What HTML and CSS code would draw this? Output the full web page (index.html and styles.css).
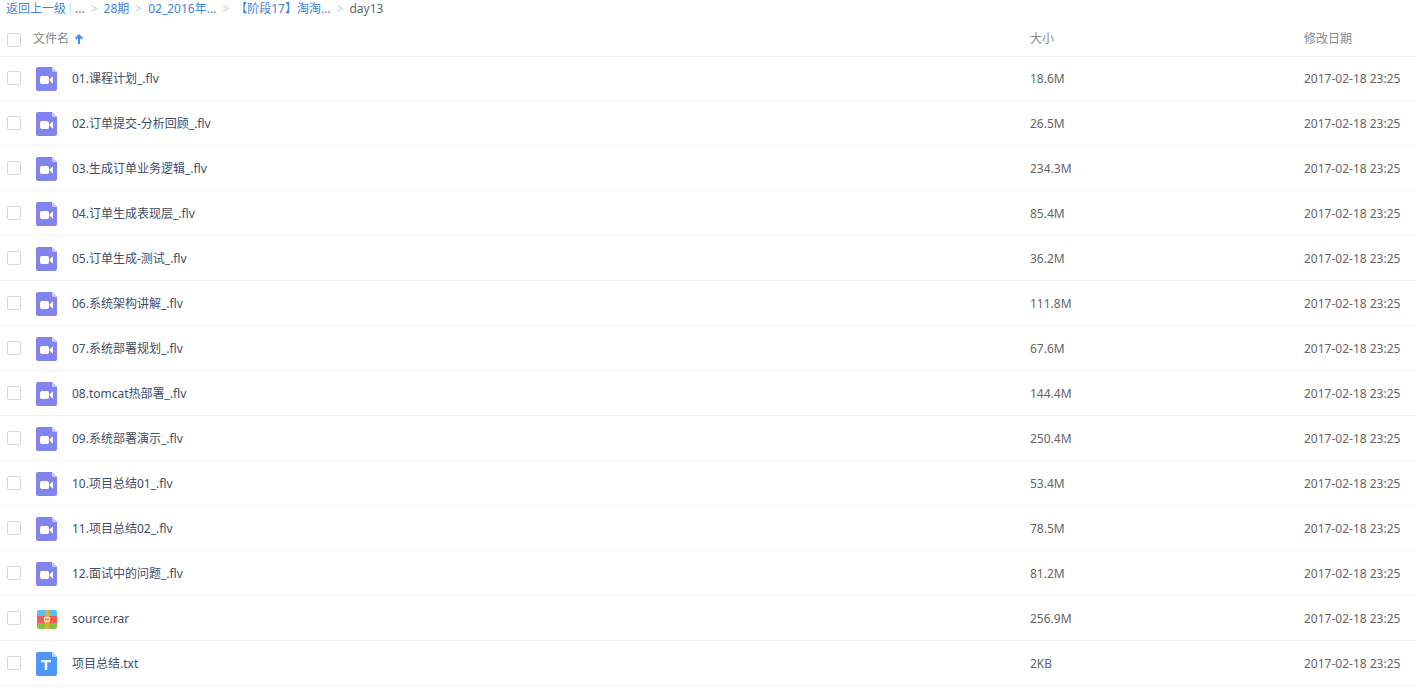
FILE: index.html
```html
<!DOCTYPE html>
<html lang="zh-CN">
<head>
<meta charset="utf-8">
<title>day13</title>
<link rel="stylesheet" href="styles.css">
</head>
<body>
<svg class="sprite" aria-hidden="true">
  <symbol id="icon-video" viewBox="0 0 21 24">
    <path fill="#8283ec" d="M2 0H16L21 5V22Q21 24 19 24H2Q0 24 0 22V2Q0 0 2 0Z"/>
    <path fill="#c9c9fa" d="M16 0L21 5H17.500Q16 5 16 3.500Z"/>
    <rect x="4" y="9" width="9" height="8" rx="1.800" fill="#fff"/>
    <path fill="#fff" d="M13.800 12.200L16.300 9.800Q17 9.300 17 10V16Q17 16.700 16.300 16.200L13.800 13.800Z"/>
  </symbol>
  <symbol id="icon-text" viewBox="0 0 21 24">
    <path fill="#4e96fc" d="M2 0H16L21 5V22Q21 24 19 24H2Q0 24 0 22V2Q0 0 2 0Z"/>
    <path fill="#b5d4ff" d="M16 0L21 5H17.500Q16 5 16 3.500Z"/>
    <path fill="#fff" d="M5 8H15V10.200H11.200V18H8.800V10.200H5Z"/>
  </symbol>
  <symbol id="icon-archive" viewBox="0 0 21 24">
    <path fill="#54c3f1" d="M3 3H19Q21 3 21 5V9H1V5Q1 3 3 3Z"/>
    <path fill="#f25b57" d="M1 9H21V16H1Z"/>
    <path fill="#84c341" d="M1 16H21V20Q21 22 19 22H3Q1 22 1 20Z"/>
    <path fill="#e5ae4a" d="M9 3H13V22H9Z"/>
    <rect x="8.500" y="10.500" width="5" height="4" fill="#eda64b" stroke="#fff"/>
  </symbol>
</svg>
<nav class="crumbs" aria-label="路径">
  <a class="back" href="#">返回上一级</a>
  <span class="ellipsis">...</span>
  <span class="sep">&gt;</span>
  <a href="#">28期</a>
  <span class="sep">&gt;</span>
  <a href="#">02_2016年...</a>
  <span class="sep">&gt;</span>
  <a href="#">【阶段17】淘淘...</a>
  <span class="sep">&gt;</span>
  <span class="current">day13</span>
</nav>
<table class="files">
  <colgroup>
    <col class="col-pick">
    <col class="col-type">
    <col>
    <col class="col-size">
    <col class="col-date">
  </colgroup>
  <thead>
    <tr>
      <th class="pick"><input class="check" type="checkbox" aria-label="全选"></th>
      <th class="name" colspan="2"><span class="sort">文件名<svg class="arrow" viewBox="0 0 8 10" aria-hidden="true"><path fill="none" stroke="#3b8cff" stroke-width="2" d="M4 10V1.500M0.700 4.800L4 1.500L7.300 4.800"/></svg></span></th>
      <th class="size">大小</th>
      <th class="date">修改日期</th>
    </tr>
  </thead>
  <tbody id="rows"></tbody>
</table>
<script src="files.js"></script>
</body>
</html>
```
FILE: files.js
```js
const files = [
  ["video", "01.课程计划_.flv", "18.6M"],
  ["video", "02.订单提交-分析回顾_.flv", "26.5M"],
  ["video", "03.生成订单业务逻辑_.flv", "234.3M"],
  ["video", "04.订单生成表现层_.flv", "85.4M"],
  ["video", "05.订单生成-测试_.flv", "36.2M"],
  ["video", "06.系统架构讲解_.flv", "111.8M"],
  ["video", "07.系统部署规划_.flv", "67.6M"],
  ["video", "08.tomcat热部署_.flv", "144.4M"],
  ["video", "09.系统部署演示_.flv", "250.4M"],
  ["video", "10.项目总结01_.flv", "53.4M"],
  ["video", "11.项目总结02_.flv", "78.5M"],
  ["video", "12.面试中的问题_.flv", "81.2M"],
  ["archive", "source.rar", "256.9M"],
  ["text", "项目总结.txt", "2KB"]
];

document.getElementById("rows").innerHTML = files.map(([type, name, size], i) => `
  <tr>
    <td class="pick"><input class="check" type="checkbox" id="file-${i}"></td>
    <td class="type"><svg class="icon" aria-hidden="true"><use href="#icon-${type}"/></svg></td>
    <td class="title"><label for="file-${i}">${name}</label></td>
    <td class="size">${size}</td>
    <td class="date">2017-02-18 23:25</td>
  </tr>`).join("");
```
FILE: styles.css
```css
* {
  box-sizing: border-box;
}

body {
  margin: 0;
  background: #fff;
  color: #666;
  font: 12px/16px "Noto Sans", "Noto Sans CJK SC", sans-serif;
}

.sprite {
  display: none;
}

.crumbs {
  display: flex;
  align-items: flex-start;
  gap: 6px;
  height: 22px;
  padding: 1px 0 0 6px;
  white-space: nowrap;
}

.crumbs a {
  color: #3f83dc;
  text-decoration: none;
}

.crumbs .back {
  display: flex;
  align-items: center;
  margin-right: -2px;
}

.crumbs .back::after {
  content: "";
  height: 12px;
  margin-left: 4px;
  border-left: 1px solid #c4dbfe;
}

.crumbs .sep {
  color: #b9cbe3;
}

.files {
  width: 100%;
  border-spacing: 0;
  table-layout: fixed;
}

.col-pick {
  width: 33px;
}

.col-type {
  width: 39px;
}

.col-size {
  width: 274px;
}

.col-date {
  width: 112px;
}

th,
td {
  padding: 0;
  text-align: left;
  font-weight: normal;
  vertical-align: middle;
  white-space: nowrap;
}

th {
  height: 34px;
  color: #888;
}

td {
  height: 45px;
  padding-top: 2px;
  border-bottom: 1px solid #f2f4f8;
}

tbody tr:first-child td {
  padding-top: 0;
  border-top: 1px solid #f2f4f8;
}

th.pick {
  padding: 2px 0 0 7px;
}

td.pick {
  padding: 0 0 0 7px;
}

tbody tr:first-child td.pick {
  padding-bottom: 2px;
}

.type {
  padding-left: 3px;
}

.title {
  color: #424e67;
}

.check {
  display: block;
  width: 14px;
  height: 14px;
  margin: 0;
  appearance: none;
  background: #fff;
  border: 1px solid #d5d8de;
  border-radius: 2px;
}

.check:checked {
  background: #3b8cff;
}

.icon {
  display: block;
  width: 21px;
  height: 24px;
}

.sort {
  display: flex;
  align-items: center;
  gap: 6px;
}

.arrow {
  width: 8px;
  height: 10px;
}
```
